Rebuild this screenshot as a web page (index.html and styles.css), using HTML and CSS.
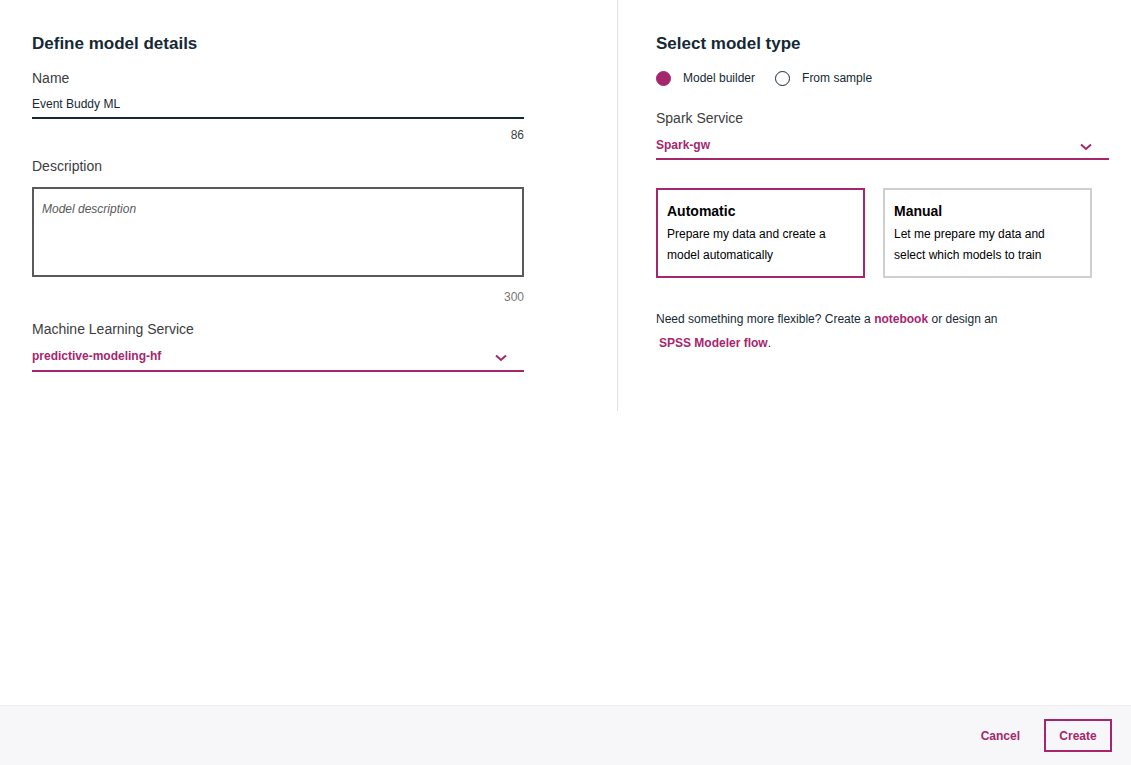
FILE: index.html
```html
<!DOCTYPE html>
<html>
<head>
<meta charset="utf-8">
<link rel="stylesheet" href="styles.css">
</head>
<body>
<div class="page">
  <div class="main">
    <section class="col left">
      <h2 class="heading">Define model details</h2>
      <div class="label">Name</div>
      <div class="input">Event Buddy ML</div>
      <div class="counter">86</div>
      <div class="label desc-label">Description</div>
      <div class="textarea"><span class="placeholder">Model description</span></div>
      <div class="counter grey">300</div>
      <div class="label ml-label">Machine Learning Service</div>
      <div class="select">
        <span>predictive-modeling-hf</span>
        <svg class="chev" width="12" height="8" viewBox="0 0 12 8"><path d="M1 1.5 L6 6 L11 1.5" fill="none" stroke="#a6266e" stroke-width="2"/></svg>
      </div>
    </section>
    <section class="col right">
      <h2 class="heading">Select model type</h2>
      <div class="radios">
        <span class="radio on"></span><span class="radio-text">Model builder</span>
        <span class="radio"></span><span class="radio-text">From sample</span>
      </div>
      <div class="label spark-label">Spark Service</div>
      <div class="select spark-select">
        <span>Spark-gw</span>
        <svg class="chev" width="12" height="8" viewBox="0 0 12 8"><path d="M1 1.5 L6 6 L11 1.5" fill="none" stroke="#a6266e" stroke-width="2"/></svg>
      </div>
      <div class="cards">
        <div class="card selected">
          <div class="card-title">Automatic</div>
          <div class="card-text">Prepare my data and create a model automatically</div>
        </div>
        <div class="card">
          <div class="card-title">Manual</div>
          <div class="card-text">Let me prepare my data and select which models to train</div>
        </div>
      </div>
      <p class="hint">Need something more flexible? Create a <a class="link">notebook</a> or design an<br><span class="indent"></span><a class="link">SPSS Modeler flow</a>.</p>
    </section>
  </div>
  <footer class="footer">
    <button class="btn-text">Cancel</button>
    <button class="btn-outline">Create</button>
  </footer>
</div>
</body>
</html>
```
FILE: styles.css
```css
* { box-sizing: border-box; }
html, body { margin: 0; padding: 0; }
body {
  font-family: "Liberation Sans", Arial, sans-serif;
  color: #152935;
  background: #fff;
}
.page {
  width: 1131px;
  height: 765px;
  display: flex;
  flex-direction: column;
}
.main {
  flex: 1;
  display: flex;
  align-items: flex-start;
}
.col { display: flex; flex-direction: column; }
.left {
  width: 617px;
  padding: 33px 93px 0 32px;
}
.right {
  width: 514px;
  border-left: 1px solid #e2e2e2;
  padding: 33px 22px 0 38px;
  height: 411px;
}
.heading {
  margin: 0;
  font-size: 17px;
  line-height: 22px;
  font-weight: bold;
  color: #152935;
}
.label {
  font-size: 14px;
  line-height: 18px;
  color: #3d3d3d;
  margin-top: 14px;
}
.input {
  margin-top: 9px;
  font-size: 12px;
  line-height: 16px;
  color: #152935;
  padding-bottom: 5px;
  border-bottom: 2px solid #152935;
}
.counter {
  text-align: right;
  font-size: 12px;
  line-height: 16px;
  margin-top: 8px;
  color: #3d3d3d;
}
.counter.grey { color: #777; margin-top: 12px; }
.desc-label { margin-top: 14px; }
.textarea {
  margin-top: 12px;
  height: 90px;
  border: 2px solid #5a5a5a;
  padding: 12px 8px;
  font-size: 12px;
  line-height: 16px;
}
.placeholder { font-style: italic; color: #5a5a5a; }
.ml-label { margin-top: 15px; }
.select {
  margin-top: 10px;
  display: flex;
  justify-content: space-between;
  align-items: center;
  font-size: 12px;
  line-height: 16px;
  font-weight: bold;
  color: #a6266e;
  padding-bottom: 6px;
  border-bottom: 2px solid #a6266e;
}
.spark-select { padding-bottom: 5px; }
.chev { margin-right: 17px; margin-top: 3px; }
.radios {
  margin-top: 15px;
  display: flex;
  align-items: center;
  font-size: 12px;
  line-height: 16px;
  color: #152935;
}
.radio {
  width: 15px;
  height: 15px;
  border-radius: 50%;
  border: 1.5px solid #152935;
  margin-right: 12px;
}
.radio.on { background: #a6266e; border-color: #a6266e; margin-right: 12px; }
.radio-text { margin-right: 20px; }
.spark-label { margin-top: 23px; }
.cards {
  margin-top: 28px;
  display: flex;
  gap: 18px;
}
.card {
  width: 209px;
  height: 90px;
  border: 2px solid #cfcfcf;
  padding: 12px 16px 12px 9px;
  color: #000;
}
.card.selected { border-color: #a6266e; }
.card-title { font-size: 14px; font-weight: bold; line-height: 18px; }
.card-text { font-size: 12px; line-height: 21px; margin-top: 4px; }
.hint {
  margin: 29px 0 0;
  font-size: 12px;
  line-height: 24px;
  color: #152935;
}
.link { color: #a6266e; font-weight: bold; text-decoration: none; }
.indent { display: inline-block; width: 3px; }
.footer {
  height: 60px;
  border-top: 1px solid #efeff2;
  background: #f7f7f9;
  display: flex;
  justify-content: flex-end;
  align-items: center;
  padding: 0 19px 0 0;
}
.btn-text {
  font-family: inherit;
  background: none;
  border: none;
  color: #a6266e;
  font-size: 12px;
  font-weight: bold;
  padding: 0;
  margin-right: 24px;
}
.btn-outline {
  font-family: inherit;
  background: transparent;
  border: 2px solid #a6266e;
  color: #a6266e;
  font-size: 12px;
  font-weight: bold;
  width: 68px;
  height: 33px;
  padding: 0;
}
```
